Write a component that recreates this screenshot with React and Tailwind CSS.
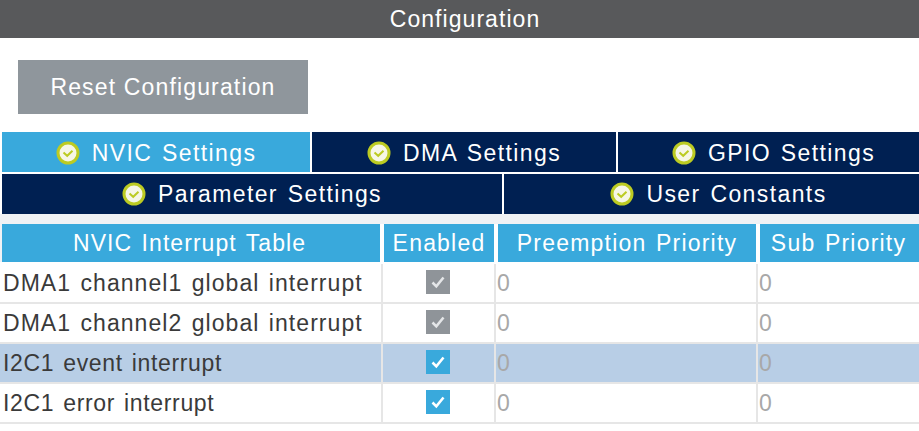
const ROWS = [
  { name: 'DMA1 channel1 global interrupt', locked: true },
  { name: 'DMA1 channel2 global interrupt', locked: true },
  { name: 'I2C1 event interrupt', active: true, short: true },
  { name: 'I2C1 error interrupt', short: true },
];

function OkIcon() {
  return (
    <svg width="24" height="24" viewBox="0 0 24 24" className="shrink-0">
      <circle cx="12" cy="12" r="10" fill="#f6f6e6" stroke="#bccb22" strokeWidth="3" />
      <path d="M7.5 11.5l3.7 3.3 5.3-5" fill="none" stroke="#bccb22" strokeWidth="2" />
    </svg>
  );
}

function Check({ locked }) {
  return (
    <span className={'flex items-center justify-center w-6 h-6 mb-[2px] mr-[2px] ' + (locked ? 'bg-[#8f9499]' : 'bg-[#39a9dc]')}>
      <svg width="18" height="18" viewBox="0 0 18 18">
        <path d="M3.5 9.5l3.8 3.8L14.5 4.5" fill="none" stroke={locked ? '#e4e6e8' : '#ffffff'} strokeWidth="2.6" />
      </svg>
    </span>
  );
}

function Tab({ label, active, className }) {
  return (
    <div className={'flex items-center justify-center gap-[12px] text-white tracking-[1.4px] ' + (active ? 'bg-[#39a9dc] ' : 'bg-[#002052] ') + className}>
      <OkIcon />
      <span>{label}</span>
    </div>
  );
}

export default function App() {
  return (
    <div className="w-[919px] h-[431px] overflow-hidden bg-white text-[23px] leading-none tracking-[1.05px] [word-spacing:2px] font-['Liberation_Sans',sans-serif]">
      <div className="h-[38px] pl-[11px] flex items-center justify-center bg-[#58595b] text-white">Configuration</div>

      <div className="pt-[22px] pl-[18px] pb-[18px]">
        <button className="w-[290px] h-[54px] bg-[#8f969c] text-white tracking-[1.15px]">Reset Configuration</button>
      </div>

      <div className="pl-[2px] flex flex-col gap-[2px]">
        <div className="flex gap-[2px] h-[40px]">
          <Tab label="NVIC Settings" active className="w-[308px] pt-[2px]" />
          <Tab label="DMA Settings" className="w-[304px] pt-[2px]" />
          <Tab label="GPIO Settings" className="flex-1 pt-[2px] pl-[10px]" />
        </div>
        <div className="flex gap-[2px] h-[40px]">
          <Tab label="Parameter Settings" className="w-[500px]" />
          <Tab label="User Constants" className="flex-1 pl-[14px]" />
        </div>
      </div>

      <div className="bg-[#f0f2f5] pt-[10px] pl-[2px]">
        <div className="grid grid-cols-[378px_110px_258px_1fr] gap-x-[4px] h-[38px] bg-white text-white text-center tracking-[1.2px]">
          <div className="bg-[#39a9dc] flex items-center justify-center pr-[3px] tracking-[1.05px]">NVIC Interrupt Table</div>
          <div className="bg-[#39a9dc] flex items-center justify-center">Enabled</div>
          <div className="bg-[#39a9dc] flex items-center justify-center">Preemption Priority</div>
          <div className="bg-[#39a9dc] flex items-center justify-center pr-[2px]">Sub Priority</div>
        </div>
      </div>

      <div className="pt-[2px]">
        {ROWS.map(row => (
          <div
            key={row.name}
            className={'grid grid-cols-[383px_113px_262px_1fr] h-[40px] border-b-2 border-[#e6e6e6] text-[#3a3a3a] ' + (row.active ? 'bg-[#b8cee6]' : 'bg-white')}
          >
            <div className={'flex items-center pl-[3px] border-r-2 border-[#e6e6e6] ' + (row.short ? 'tracking-[0.65px]' : '')}>{row.name}</div>
            <div className="flex items-center justify-center border-r-2 border-[#e6e6e6]"><Check locked={row.locked} /></div>
            <div className="flex items-center pl-[1px] border-r-2 border-[#e6e6e6] text-[#a8a8a8]">0</div>
            <div className="flex items-center pl-[1px] text-[#a8a8a8]">0</div>
          </div>
        ))}
      </div>
    </div>
  );
}
